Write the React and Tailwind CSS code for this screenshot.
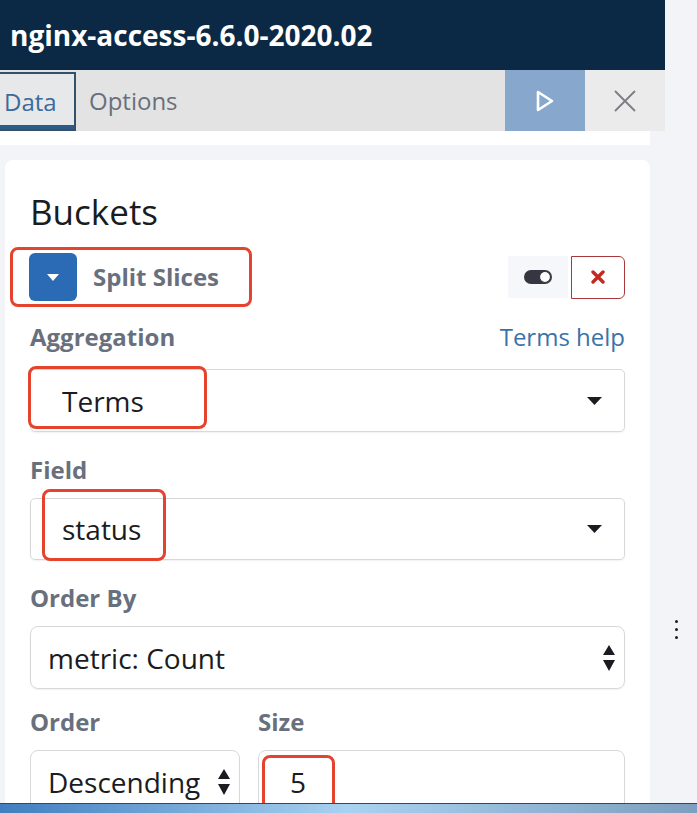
import React from 'react';

const font = { fontFamily: '"Open Sans", "Liberation Sans", sans-serif' };

function Caret() {
  return (
    <svg width="15" height="8" viewBox="0 0 15 8" className="shrink-0">
      <path d="M0 0h15L7.5 8z" fill="#1a1c21" />
    </svg>
  );
}

function UpDown() {
  return (
    <svg width="12" height="26" viewBox="0 0 12 26" className="shrink-0">
      <path d="M6 0L12 10H0z M0 15h12L6 26z" fill="#1a1c21" />
    </svg>
  );
}

function Mark({ className }) {
  return <div className={`absolute border-[3px] border-[#e4442d] rounded-[8px] ${className}`} />;
}

function Label({ children, className = '' }) {
  return <div className={`text-[24px] leading-[30px] font-bold text-[#69707d] ${className}`}>{children}</div>;
}

export default function App() {
  return (
    <div className="w-[697px] h-[813px] overflow-hidden relative bg-[#f3f4f8] flex" style={font}>
      <div className="w-[665px] shrink-0 flex flex-col">
        <div className="h-[70px] bg-[#0b2945] flex items-center pl-[10px]">
          <h1 className="text-white font-bold text-[28px]">nginx-access-6.6.0-2020.02</h1>
        </div>
        <div className="h-[61px] bg-[#e3e3e3] flex items-stretch">
          <div className="w-[76px] mt-[2px] border-2 border-l-0 border-[#34506b] bg-[#e6e8ea] flex items-center pl-[4px] relative">
            <span className="text-[24px] text-[#3b6a9c]">Data</span>
            <div className="absolute left-0 right-0 bottom-0 h-[4px] bg-[#2e5a88]" />
          </div>
          <div className="flex items-center pl-[13px] text-[24px] text-[#69707d]">Options</div>
          <div className="flex-1" />
          <div className="w-[80px] bg-[#87a8cc] flex items-center justify-center">
            <svg width="20" height="24" viewBox="0 0 20 24">
              <path d="M3 3v18l14-9z" fill="none" stroke="#fff" strokeWidth="2.6" strokeLinejoin="round" />
            </svg>
          </div>
          <div className="w-[80px] bg-[#ebebeb] flex items-center justify-center">
            <svg width="24" height="24" viewBox="0 0 24 24">
              <path d="M2 2l20 20M22 2L2 22" stroke="#7a7d83" strokeWidth="1.8" />
            </svg>
          </div>
        </div>
        <div className="h-[14px] w-[650px] bg-white" />
        <div className="ml-[5px] mt-[15px] w-[645px] flex-1 bg-white rounded-t-lg pl-[25px] pr-[25px] pt-[30px]">
          <div className="text-[35px] leading-[44px] text-[#1a1c21]">Buckets</div>
          <div className="flex items-center justify-between mt-[13px] -ml-[20px]">
            <div className="flex items-center border-[3px] border-[#e4442d] rounded-[8px] h-[60px] w-[242px] pl-[16px]">
              <div className="w-[48px] h-[48px] rounded-[6px] bg-[#2b6bb5] flex items-center justify-center">
                <svg width="12" height="7" viewBox="0 0 12 7"><path d="M0 0h12L6 7z" fill="#fff" /></svg>
              </div>
              <span className="ml-[16px] text-[24px] font-bold text-[#69707d]">Split Slices</span>
            </div>
            <div className="flex items-center">
              <div className="w-[60px] h-[42px] bg-[#f5f7fa] flex items-center justify-center">
                <svg width="30" height="16" viewBox="0 0 30 16">
                  <rect x="1" y="1" width="28" height="14" rx="7" fill="#343741" />
                  <circle cx="22" cy="8" r="5.5" fill="#fff" stroke="#343741" strokeWidth="1.2" />
                </svg>
              </div>
              <div className="ml-[3px] w-[54px] h-[43px] border-[1.5px] border-[#a8383a] rounded-r-[6px] flex items-center justify-center">
                <svg width="14" height="14" viewBox="0 0 14 14">
                  <path d="M2 2l10 10M12 2L2 12" stroke="#c6281f" strokeWidth="3.4" strokeLinecap="round" />
                </svg>
              </div>
            </div>
          </div>

          <div className="flex items-center justify-between mt-[15px]">
            <Label>Aggregation</Label>
            <span className="text-[24px] leading-[30px] text-[#3a73a9]">Terms help</span>
          </div>
          <div className="relative mt-[17px] h-[63px] border border-[#d6d8dc] rounded-[5px] shadow-[0_1px_2px_rgba(0,0,0,0.06)] flex items-center justify-between pl-[31px] pr-[22px]">
            <span className="text-[28px] text-[#1a1c21]">Terms</span>
            <Caret />
            <Mark className="-left-[3px] -top-[4px] w-[179px] h-[63px]" />
          </div>

          <Label className="mt-[23px]">Field</Label>
          <div className="relative mt-[13px] h-[62px] border border-[#d6d8dc] rounded-[5px] shadow-[0_1px_2px_rgba(0,0,0,0.06)] flex items-center justify-between pl-[31px] pr-[22px]">
            <span className="text-[28px] text-[#1a1c21]">status</span>
            <Caret />
            <Mark className="left-[11px] -top-[10px] w-[124px] h-[72px]" />
          </div>

          <Label className="mt-[23px]">Order By</Label>
          <div className="mt-[13px] h-[63px] border border-[#d6d8dc] rounded-[8px] shadow-[0_1px_2px_rgba(0,0,0,0.06)] flex items-center justify-between pl-[17px] pr-[9px]">
            <span className="text-[28px] text-[#1a1c21]">metric: Count</span>
            <UpDown />
          </div>

          <div className="flex gap-[18px] mt-[18px]">
            <div className="w-[210px]">
              <Label>Order</Label>
              <div className="mt-[13px] h-[63px] border border-[#d6d8dc] rounded-[8px] flex items-center justify-between pl-[17px] pr-[9px]">
                <span className="text-[28px] text-[#1a1c21]">Descending</span>
                <UpDown />
              </div>
            </div>
            <div className="flex-1">
              <Label>Size</Label>
              <div className="relative mt-[13px] h-[63px] border border-[#d6d8dc] rounded-[8px] flex items-center pl-[31px]">
                <span className="text-[28px] text-[#1a1c21]">5</span>
                <Mark className="left-[3px] top-[4px] w-[73px] h-[72px]" />
              </div>
            </div>
          </div>
        </div>
      </div>
      <div className="flex-1 flex flex-col items-start pl-[10px] pt-[620px]">
        <div className="flex flex-col gap-[5px]">
          <div className="w-[3px] h-[3px] rounded-full bg-[#1a1c21]" />
          <div className="w-[3px] h-[3px] rounded-full bg-[#1a1c21]" />
          <div className="w-[3px] h-[3px] rounded-full bg-[#1a1c21]" />
        </div>
      </div>
      <div className="absolute left-0 right-0 bottom-0 h-[10px] border-t border-[#2c4a6a] bg-gradient-to-r from-[#3f7ec0] via-[#a9d2f0] to-[#7e9fbf]" />
    </div>
  );
}
